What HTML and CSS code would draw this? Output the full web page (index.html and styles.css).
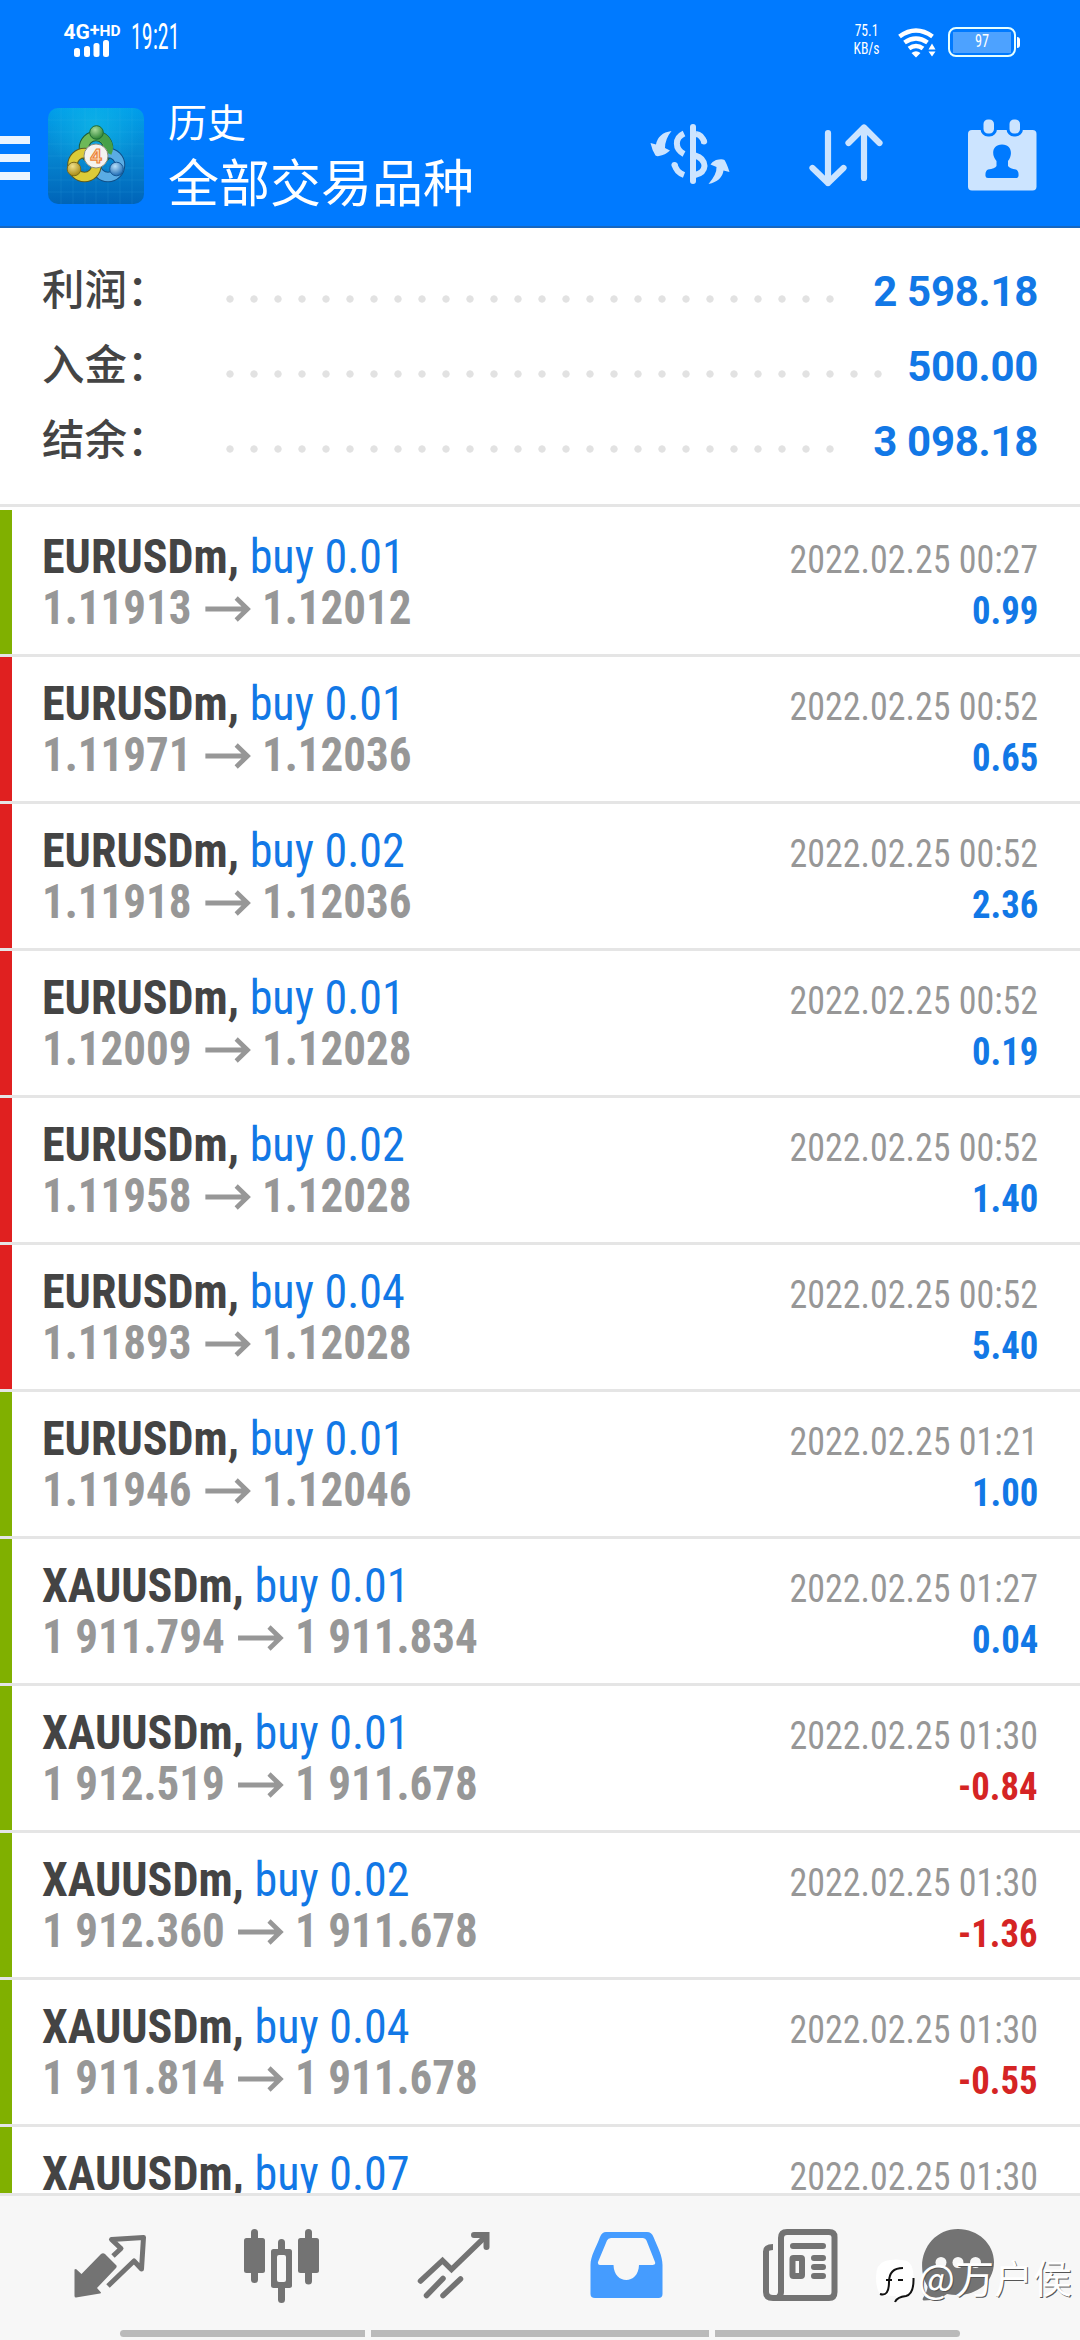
FILE: index.html
```html
<!DOCTYPE html>
<html lang="zh-CN">
<head>
<meta charset="utf-8">
<title>历史</title>
<link rel="stylesheet" href="styles.css">
</head>
<body>
<svg width="0" height="0" class="defs">
  <symbol id="arrow" viewBox="0 0 49 26"><path d="M0 13H45M33 2L45 13L33 24" fill="none" stroke="#979797" stroke-width="5"/></symbol>
</svg>
<div class="screen">
  <header class="header">
    <div class="status">
      <div class="network">
        <span class="net-label">4G<sup>+</sup><small>HD</small></span>
        <svg width="36" height="17" viewBox="0 0 36 17" fill="#fff"><rect x="0" y="8" width="6" height="9" rx="2.500"/><rect x="10" y="6" width="6" height="11" rx="2.500"/><rect x="19.500" y="3" width="6" height="14" rx="2.500"/><rect x="29" y="0" width="6" height="17" rx="2.500"/></svg>
      </div>
      <span class="clock">19:21</span>
      <div class="speed"><span>75.1</span><span>KB/s</span></div>
      <svg class="wifi" width="40" height="32" viewBox="897 27 40 32"><g fill="none" stroke="#fff" stroke-width="4.500"><path d="M899.500 36.500Q916 24.500 932.500 36.500"/><path d="M904.500 42.500Q916 34.500 927.500 42.500"/><path d="M909 48.500Q916 43.500 923 48.500"/></g><path d="M911.500 53Q916 49.500 920.500 53L916 57.500ZM932 43.500L935.500 49.500H928.500ZM928.500 51.500H935.500L932 56.500Z" fill="#fff"/></svg>
      <div class="battery"><span>97</span></div>
    </div>
    <div class="toolbar">
      <svg class="menu" width="30" height="44" viewBox="0 0 30 44" fill="#ebf5ff"><path d="M0 0H30V8H0ZM0 18H30V26H0ZM0 36H30V44H0Z"/></svg>
      <svg class="app" width="96" height="96" viewBox="0 0 96 96">
        <defs>
          <linearGradient id="bg" x1=".5" y1="0" x2=".5" y2="1"><stop offset="0" stop-color="#009eea"/><stop offset=".45" stop-color="#0688d2"/><stop offset="1" stop-color="#0064b8"/></linearGradient>
          <radialGradient id="glow" cx=".48" cy=".2" r=".5"><stop offset="0" stop-color="#14c0e8" stop-opacity=".6"/><stop offset="1" stop-color="#14c0e8" stop-opacity="0"/></radialGradient>
          <radialGradient id="gg" cx=".4" cy=".3" r=".7"><stop offset="0" stop-color="#a9db9b"/><stop offset="1" stop-color="#2c8434"/></radialGradient>
          <radialGradient id="yy" cx=".4" cy=".3" r=".7"><stop offset="0" stop-color="#f0e08a"/><stop offset="1" stop-color="#a88a14"/></radialGradient>
          <radialGradient id="bb" cx=".4" cy=".3" r=".7"><stop offset="0" stop-color="#b8e0fa"/><stop offset="1" stop-color="#1e6bb4"/></radialGradient>
        </defs>
        <rect width="96" height="96" rx="10" fill="url(#bg)"/><rect width="96" height="96" rx="10" fill="url(#glow)"/>
        <path d="M13 0V96M25 0V96M37 0V96M48 0V96M60 0V96M72 0V96M84 0V96M0 12H96M0 24H96M0 36H96M0 48H96M0 60H96M0 72H96M0 84H96" stroke="#4cc4f0" stroke-opacity=".13"/>
        <g fill="none">
          <circle cx="48" cy="40" r="12" stroke="#1d5a38" stroke-width="10.500"/><circle cx="48" cy="40" r="12" stroke="#6db958" stroke-width="8.500"/>
          <circle cx="60" cy="57" r="12" stroke="#104f88" stroke-width="10.500"/><circle cx="60" cy="57" r="12" stroke="#5aace4" stroke-width="8.500"/>
          <circle cx="36.500" cy="57" r="12" stroke="#5a5a20" stroke-width="10.500"/><circle cx="36.500" cy="57" r="12" stroke="#dccb38" stroke-width="8.500"/>
          <path d="M48 28A12 12 0 0 1 59.500 45" stroke="#46a048" stroke-width="8.500"/>
        </g>
        <circle cx="48.500" cy="24.500" r="6.800" fill="url(#gg)" stroke="#1f6b35"/><circle cx="26" cy="61" r="6.800" fill="url(#yy)" stroke="#7c6a1a"/><circle cx="68.500" cy="61" r="6.800" fill="url(#bb)" stroke="#175795"/>
        <circle cx="48" cy="48" r="12" fill="#f4f3f0" stroke="#8c8e80"/><text x="48" y="55" class="logo-four">4</text>
      </svg>
      <div class="titles"><span class="sub">历史</span><span class="main">全部交易品种</span></div>
      <svg class="tool" width="80" height="76" viewBox="650 117 80 76" fill="#cce4ff">
        <g fill="none" stroke="#cce4ff" stroke-width="6"><path d="M693 127V181" stroke-linecap="round"/><path d="M696 134Q702 134.500 704.500 143" /><path d="M695 155.500Q704 158 704.500 166Q704 173 695 175"/><path d="M684 133.500C674.500 138 674.500 149 684 154M674.500 164Q676 172 684 175"/></g>
        <circle cx="704" cy="141.500" r="3"/><circle cx="674.500" cy="165" r="3"/>
        <path d="M671.500 131Q658 133 656 144.500L650.500 143Q652 150 655.500 155.500Q657 156.500 659 156Q665 155 670 150.500L665 148Q665 139 671.500 131ZM708.500 184Q722 181 723.500 170.500L729.500 172Q727 164 724.500 160Q722 158.500 716 160Q712 161.500 710.500 164.500L716.500 167Q717 174 708.500 184Z"/>
      </svg>
      <svg class="tool" width="80" height="76" viewBox="806 117 80 76" fill="none" stroke="#cce4ff" stroke-width="6.200" stroke-linecap="round" stroke-linejoin="round"><path d="M828 133V183M812.500 168L828 183L843.500 168M864 178V127.500M848.500 143L864 127.500L879.500 143"/></svg>
      <svg class="tool" width="80" height="76" viewBox="962 117 80 76"><rect x="968" y="130" width="68.500" height="60.500" rx="4" fill="#cce4ff"/><g fill="#cce4ff" stroke="#007aff" stroke-width="3"><rect x="982" y="118" width="13.500" height="17" rx="6"/><rect x="1008" y="118" width="13.500" height="17" rx="6"/></g><path d="M1002 144.500C1012 144.500 1013 155 1008 161V166Q1010 168.500 1016 169.500Q1019 171 1018.500 176Q1018.500 178 1016 178H988Q985.500 178 985.500 176Q985 171 988 169.500Q995 168.500 996.500 166V161C991 155 992 144.500 1002 144.500Z" fill="#007aff"/></svg>
    </div>
  </header>
  <section class="summary">
    <div class="line"><span class="label">利润：</span><i class="dots"></i><b>2 598.18</b></div>
    <div class="line"><span class="label">入金：</span><i class="dots"></i><b>500.00</b></div>
    <div class="line"><span class="label">结余：</span><i class="dots"></i><b>3 098.18</b></div>
  </section>
  <main class="deals">
    <article class="deal tp first"><div class="info"><p><strong>EURUSDm,</strong> <span>buy 0.01</span></p><p class="price">1.11913<svg><use href="#arrow"/></svg>1.12012</p></div><div class="result"><time>2022.02.25 00:27</time><b>0.99</b></div></article>
    <article class="deal sl"><div class="info"><p><strong>EURUSDm,</strong> <span>buy 0.01</span></p><p class="price">1.11971<svg><use href="#arrow"/></svg>1.12036</p></div><div class="result"><time>2022.02.25 00:52</time><b>0.65</b></div></article>
    <article class="deal sl"><div class="info"><p><strong>EURUSDm,</strong> <span>buy 0.02</span></p><p class="price">1.11918<svg><use href="#arrow"/></svg>1.12036</p></div><div class="result"><time>2022.02.25 00:52</time><b>2.36</b></div></article>
    <article class="deal sl"><div class="info"><p><strong>EURUSDm,</strong> <span>buy 0.01</span></p><p class="price">1.12009<svg><use href="#arrow"/></svg>1.12028</p></div><div class="result"><time>2022.02.25 00:52</time><b>0.19</b></div></article>
    <article class="deal sl"><div class="info"><p><strong>EURUSDm,</strong> <span>buy 0.02</span></p><p class="price">1.11958<svg><use href="#arrow"/></svg>1.12028</p></div><div class="result"><time>2022.02.25 00:52</time><b>1.40</b></div></article>
    <article class="deal sl"><div class="info"><p><strong>EURUSDm,</strong> <span>buy 0.04</span></p><p class="price">1.11893<svg><use href="#arrow"/></svg>1.12028</p></div><div class="result"><time>2022.02.25 00:52</time><b>5.40</b></div></article>
    <article class="deal tp"><div class="info"><p><strong>EURUSDm,</strong> <span>buy 0.01</span></p><p class="price">1.11946<svg><use href="#arrow"/></svg>1.12046</p></div><div class="result"><time>2022.02.25 01:21</time><b>1.00</b></div></article>
    <article class="deal tp"><div class="info"><p><strong>XAUUSDm,</strong> <span>buy 0.01</span></p><p class="price">1 911.794<svg><use href="#arrow"/></svg>1 911.834</p></div><div class="result"><time>2022.02.25 01:27</time><b>0.04</b></div></article>
    <article class="deal tp"><div class="info"><p><strong>XAUUSDm,</strong> <span>buy 0.01</span></p><p class="price">1 912.519<svg><use href="#arrow"/></svg>1 911.678</p></div><div class="result"><time>2022.02.25 01:30</time><b class="loss">-0.84</b></div></article>
    <article class="deal tp"><div class="info"><p><strong>XAUUSDm,</strong> <span>buy 0.02</span></p><p class="price">1 912.360<svg><use href="#arrow"/></svg>1 911.678</p></div><div class="result"><time>2022.02.25 01:30</time><b class="loss">-1.36</b></div></article>
    <article class="deal tp"><div class="info"><p><strong>XAUUSDm,</strong> <span>buy 0.04</span></p><p class="price">1 911.814<svg><use href="#arrow"/></svg>1 911.678</p></div><div class="result"><time>2022.02.25 01:30</time><b class="loss">-0.55</b></div></article>
    <article class="deal tp"><div class="info"><p><strong>XAUUSDm,</strong> <span>buy 0.07</span></p></div><div class="result"><time>2022.02.25 01:30</time></div></article>
  </main>
  <nav class="nav">
    <div class="tabs">
      <svg viewBox="24 2196 172 134"><path d="M113 2256L121 2248.500L111.500 2239.500L143.500 2237.500L141.500 2269L134 2261L108 2286" fill="none" stroke="#737373" stroke-width="5" stroke-linejoin="round"/><path d="M101 2254Q103 2252.500 105 2254L116.500 2265.500Q117 2267 116 2268L97 2288L101 2292.500Q101 2293.500 100 2293.500L76 2297.500Q74.500 2297.500 74.500 2296V2269.500L76 2269L81.500 2274Z" fill="#737373"/></svg>
      <svg viewBox="196 2196 172 134"><g fill="#737373"><rect x="251" y="2229" width="7" height="54" rx="3.500"/><rect x="305" y="2229" width="7" height="55.500" rx="3.500"/><rect x="278" y="2239" width="7" height="64" rx="3.500"/><rect x="244" y="2238" width="21" height="35" rx="2.500"/><rect x="298" y="2238" width="21" height="35" rx="2.500"/><rect x="271" y="2249" width="21" height="39" rx="2.500"/></g><rect x="277" y="2255" width="9" height="27" rx="2" fill="#f7f7f7"/></svg>
      <svg viewBox="368 2196 172 134" fill="none" stroke="#737373" stroke-width="5.500" stroke-linecap="round"><path d="M420.500 2281L442.500 2260.500L451.500 2269.500L485 2237"/><path d="M474 2235H486.500V2247" stroke-width="6"/><path d="M426.500 2295.500L443 2278.500M443 2295.500L460.500 2279"/></svg>
      <svg viewBox="540 2196 172 134"><path fill="#459cff" fill-rule="evenodd" d="M606 2232H647Q651.500 2232 653.500 2237C658 2248 662.500 2256 662.500 2265V2294Q662.500 2298 658.500 2298H595Q590.500 2298 590.500 2294V2265C590.500 2256 596 2248 600 2237Q602 2232 606 2232ZM611 2238Q608 2238 607 2240.500L598 2262Q597.500 2265 600 2265H613.500C614 2285 638.500 2285 639 2265H652.500Q656 2265 655 2262L646.500 2240.500Q645.500 2238 643 2238Z"/></svg>
      <svg viewBox="712 2196 172 134" fill="none" stroke="#737373" stroke-width="6"><path d="M773 2247Q766 2247 766 2251.500V2292Q766 2298 773 2298H829Q834.500 2298 834.500 2292V2237Q834.500 2232 829 2232H787Q781 2232 781 2238V2292Q781 2295 778.500 2297"/><path d="M793 2246H823M814 2258H823M814 2267H823M814 2276H823" stroke-linecap="round"/><rect x="792.500" y="2258" width="9.500" height="18" rx="1"/></svg>
      <svg viewBox="884 2196 172 134"><path d="M958 2229C978 2229 994 2244 994 2262C994 2285 972 2299 947 2294Q940 2300 924 2300.500Q922 2300.500 923 2298Q928 2290 927.500 2286.500C913 2261 929 2229 958 2229Z" fill="#737373"/><g fill="#f7f7f7"><circle cx="941" cy="2262.500" r="5.500"/><circle cx="958" cy="2262.500" r="5.500"/><circle cx="975.500" cy="2262.500" r="5.500"/></g></svg>
    </div>
    <div class="gesture"><i></i><i class="wide"></i><i></i></div>
  </nav>
  <div class="watermark">
    <svg width="42" height="48" viewBox="874 2258 42 48"><path d="M885 2261Q896 2258 907 2261Q914 2264 913.500 2279Q914 2294 906 2296Q898 2297 895 2303L896 2296L882 2295.500Q876 2292 876 2277Q876 2264 885 2261Z" fill="#fff"/><path d="M913.500 2278Q914 2294 906 2296Q897 2297 895 2302M880 2294Q889 2297 889 2282Q889 2268 903 2268M886 2280H892M898 2280H903" fill="none" stroke="#111" stroke-width="2"/></svg>
    <span>@万户侯</span>
  </div>
</div>
</body>
</html>
```
FILE: styles.css
```css
* { box-sizing: border-box; }
body { margin: 0; font-family: Roboto, "Noto Sans CJK SC", sans-serif; background: #fff; }
p { margin: 0; }
svg { display: block; flex: none; }
.defs { position: absolute; }
.screen { position: relative; width: 1080px; height: 2340px; display: flex; flex-direction: column; overflow: hidden; }

.header { height: 228px; flex: none; background: #007aff; border-bottom: 2px solid #1767c0; color: #fff; }
.status { height: 84px; display: flex; align-items: flex-start; padding: 0 60px 0 62px; }
.network { width: 60px; padding-top: 23px; display: flex; flex-direction: column; align-items: center; }
.net-label { font-size: 21px; font-weight: 700; line-height: 18px; height: 17px; white-space: nowrap; display: flex; }
.net-label sup { font-size: 18px; line-height: 14px; }
.net-label small { font-size: 15.5px; line-height: 16px; }
.clock { width: 44px; margin: 17px 0 0 9px; font: 36px/40px "Roboto Condensed", Roboto, sans-serif; transform: scaleX(.61); transform-origin: 0 0; }
.speed { margin: 22px 0 0 679px; width: 25px; display: flex; flex-direction: column; align-items: center; font: 16px/18px "Roboto Condensed", Roboto, sans-serif; transform: scaleX(.85); }
.wifi { margin: 27px 0 0 18px; }
.battery { position: relative; margin: 27px 0 0 11px; width: 68px; height: 30px; border: 2px solid #e6ffff; border-radius: 8px; padding: 3px; background: linear-gradient(#4da2ff, #4da2ff) center / 58px 21px no-repeat; }
.battery::after { content: ""; position: absolute; right: -6px; top: 8px; width: 3px; height: 11px; border-radius: 0 4px 4px 0; background: #fff; }
.battery span { display: block; text-align: center; font: 19px/18px "Roboto Condensed", Roboto, sans-serif; transform: scaleX(.75); }
.toolbar { display: flex; align-items: flex-start; }
.menu { margin-top: 52px; }
.app { margin: 24px 0 0 18px; }
.logo-four { font: 700 20px "Liberation Sans", sans-serif; fill: #fbe0c0; stroke: #ec8238; stroke-width: 1.2px; text-anchor: middle; }
.titles { display: flex; flex-direction: column; width: 480px; margin: 10px 0 0 24px; }
.sub { font-size: 39px; line-height: 60px; }
.main { font-size: 51px; line-height: 62px; }
.tool { margin: 33px 0 0 2px; }
.tool + .tool { margin-left: 76px; }

.summary { height: 279px; flex: none; padding: 25px 42px 0; border-bottom: 3px solid #e5e5e5; }
.line { height: 75px; display: flex; align-items: center; }
.label { width: 176px; font-size: 42.5px; font-weight: 500; color: #444; line-height: 75px; }
.dots { flex: 1; height: 8px; margin: 17px 25px 0 0; background: radial-gradient(circle at 12px 4px, #e2e2e2 3.3px, transparent 4px) 0 0 / 24px 8px repeat-x; }
.line b { font-size: 42px; line-height: 75px; padding-top: 1px; color: #1278e6; letter-spacing: -.3px; }

.deals { flex: 1; min-height: 0; overflow: hidden; }
.deal { height: 147px; display: flex; justify-content: space-between; padding: 21px 42px 0; border-bottom: 3px solid #e5e5e5; background: linear-gradient(#80b000, #80b000) 0 0 / 12px 100% no-repeat; }
.deal.sl { background-image: linear-gradient(#e02020, #e02020); }
.deal.first { height: 150px; padding-top: 24px; background-position: 0 3px; background-size: 12px 144px; }
.info, .result { font-family: "Roboto Condensed", Roboto, sans-serif; }
.info { font-size: 48px; line-height: 51px; white-space: nowrap; }
.info p { transform: scaleX(.96); transform-origin: 0 0; }
.info strong { color: #444; }
.info span { color: #1278e6; }
.info .price { display: flex; color: #979797; font-weight: 700; transform: scaleX(.938); }
.price svg { width: 49px; height: 26px; margin: 14px 12px 0 14px; }
.result { display: flex; flex-direction: column; align-items: flex-end; padding-top: 3px; font-size: 39.5px; line-height: 51px; white-space: nowrap; }
.result time, .result b { transform: scaleX(.91); transform-origin: 100% 0; }
.result time { color: #979797; }
.result b { color: #1278e6; transform: scaleX(.93); }
.result b.loss { color: #d52424; }

.nav { height: 147px; flex: none; background: #f7f7f7; border-top: 3px solid #e5e5e5; }
.tabs { display: flex; padding-left: 24px; }
.tabs svg { width: 172px; height: 134px; }
.gesture { display: flex; gap: 6px; justify-content: center; }
.gesture i { width: 245px; height: 7px; background: #bababa; border-radius: 4px 0 0 4px; }
.gesture .wide { width: 338px; border-radius: 0; }
.gesture i:last-child { border-radius: 0 4px 4px 0; }
.watermark { position: absolute; left: 874px; top: 2258px; display: flex; align-items: flex-start; color: #fff; font: 400 39px/36px "Noto Sans CJK SC", sans-serif; text-shadow: 1px 1px 0 #555; }
.watermark span { margin-left: 2px; white-space: nowrap; }
```
